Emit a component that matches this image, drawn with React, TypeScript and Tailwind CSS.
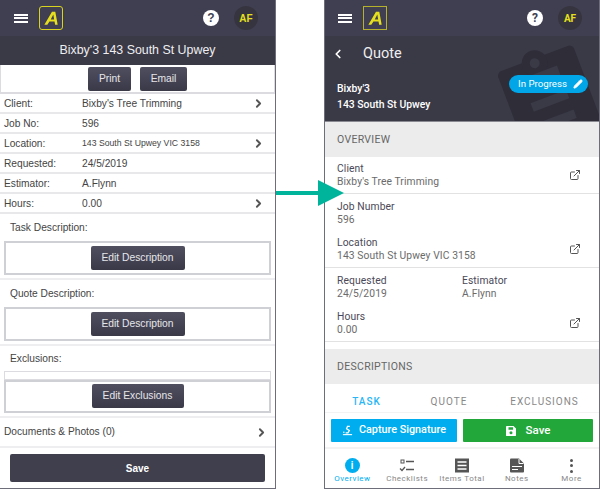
import { ChevronLeft, ChevronRight, ExternalLink, Pencil } from 'lucide-react';
import type { ReactNode } from 'react';

function Logo({ square }: { square?: boolean }) {
  return (
    <div className={`flex h-[24px] w-[24px] items-center justify-center border-[1.5px] ${square ? 'border-[#b5b12a]' : 'rounded-[3px] border-[#d8d31e]'}`}>
      <svg viewBox="0 0 20 20" className="h-[19px] w-[19px]">
        <path d="M2.5 16.5 L10.5 3 H14 L16.5 16.5 H13.8 L13.2 13.2 H7.8 L5.6 16.5 Z M9.2 11 H12.8 L11.9 5.8 Z" fill="#e6e01c" fillRule="evenodd" />
      </svg>
    </div>
  );
}

function TopBar({ pad, square }: { pad: string; square?: boolean }) {
  return (
    <div className={`flex h-[36px] shrink-0 items-center bg-[#403f52] ${pad}`}>
      <div className="flex w-[14px] flex-col gap-[1.5px]">
        <div className="h-[2px] bg-white" />
        <div className="h-[2px] bg-white" />
        <div className="h-[2px] bg-white" />
      </div>
      <div className="ml-[11px]">
        <Logo square={square} />
      </div>
      <div className="ml-auto flex h-[16px] w-[16px] items-center justify-center rounded-full bg-white text-[12px] font-bold text-[#403f52]">?</div>
      <div className="ml-[15px] flex h-[24px] w-[24px] items-center justify-center rounded-full bg-[#36353f] text-[10px] font-bold text-[#e6e01c]">AF</div>
    </div>
  );
}

function OldButton({ children, w }: { children: ReactNode; w: string }) {
  return (
    <div className={`flex h-[24px] items-center justify-center rounded-[2px] bg-gradient-to-b from-[#504f60] to-[#3a3948] text-[10.3px] text-[#e6e6ea] ${w}`}>
      {children}
    </div>
  );
}

function OldRow({ label, value, arrow, small }: { label: string; value: string; arrow?: boolean; small?: boolean }) {
  return (
    <div className="flex h-[20px] items-center border-b-2 border-[#e8e8ea] pl-[4px] pr-[10px] pt-[1px] text-[10.2px] text-[#444]">
      <span className="w-[78px]">{label}</span>
      <span className={small ? 'text-[8.7px]' : ''}>{value}</span>
      {arrow && <ChevronRight className="ml-auto h-[13px] w-[13px] text-[#555]" strokeWidth={3.5} />}
    </div>
  );
}

function OldSection({ label, children, labelH }: { label: string; children: ReactNode; labelH: string }) {
  return (
    <div className="border-b-2 border-[#eeeef0] pb-[3px]">
      <div className={`flex items-center pl-[10px] text-[10.2px] text-[#444] ${labelH}`}>{label}</div>
      {children}
    </div>
  );
}

function EditBox({ label, w, h }: { label: string; w: string; h: string }) {
  return (
    <div className={`mx-[4px] flex items-center justify-center border-2 border-[#cfcfd6] ${h}`}>
      <OldButton w={w}>{label}</OldButton>
    </div>
  );
}

function OldApp() {
  return (
    <div className="flex h-[489px] w-[276px] flex-col border-r border-b border-[#6e6d7a] font-['Liberation_Sans',sans-serif]">
      <TopBar pad="pl-[14px] pr-[17px]" />
      <div className="flex h-[29px] shrink-0 items-center justify-center bg-[#3a3946] text-[12.4px] text-[#eeeef0]">Bixby'3 143 South St Upwey</div>
      <div className="flex h-[29px] items-center justify-center gap-[9px] border-x border-b-2 border-[#dcdce0]">
        <OldButton w="w-[43px]">Print</OldButton>
        <OldButton w="w-[47px]">Email</OldButton>
      </div>
      <OldRow label="Client:" value="Bixby's Tree Trimming" arrow />
      <OldRow label="Job No:" value="596" />
      <OldRow label="Location:" value="143 South St Upwey VIC 3158" arrow small />
      <OldRow label="Requested:" value="24/5/2019" />
      <OldRow label="Estimator:" value="A.Flynn" />
      <OldRow label="Hours:" value="0.00" arrow />
      <OldSection label="Task Description:" labelH="h-[27px]">
        <EditBox label="Edit Description" w="w-[94px]" h="h-[34px]" />
      </OldSection>
      <OldSection label="Quote Description:" labelH="h-[27px]">
        <EditBox label="Edit Description" w="w-[94px]" h="h-[34px]" />
      </OldSection>
      <OldSection label="Exclusions:" labelH="h-[25px]">
        <div className="mx-[4px] h-[9px] border border-[#dcdce0]" />
        <EditBox label="Edit Exclusions" w="w-[92px]" h="h-[33px] pb-[1px]" />
      </OldSection>
      <div className="flex h-[30px] items-center border-b-2 border-[#eeeef0] pl-[4px] pr-[7px] text-[10.2px] text-[#444]">
        Documents &amp; Photos (0)
        <ChevronRight className="ml-auto h-[13px] w-[13px] text-[#555]" strokeWidth={3.5} />
      </div>
      <div className="px-[10px] pt-[6px]">
        <div className="flex h-[28px] items-center justify-center rounded-[2px] bg-[#403f4e] text-[10px] font-bold text-white">Save</div>
      </div>
    </div>
  );
}

function Field({ label, value, icon, h = 'h-[37px]' }: { label: string; value: string; icon?: boolean; h?: string }) {
  return (
    <div className={`flex items-center pl-[12px] pr-[18px] ${h}`}>
      <div className="flex flex-col text-[10.3px] leading-[13px] tracking-[0.1px]">
        <span className="text-[#4a4958]">{label}</span>
        <span className="text-[#6b6b6b]">{value}</span>
      </div>
      {icon && <ExternalLink className="ml-auto h-[12px] w-[12px] text-[#555]" strokeWidth={2} />}
    </div>
  );
}

function SectionHead({ label }: { label: string }) {
  return <div className="flex h-[35px] shrink-0 items-center bg-[#ececec] pl-[12px] text-[10.5px] tracking-[0.3px] text-[#666]">{label}</div>;
}

function NavItem({ label, active, children }: { label: string; active?: boolean; children: ReactNode }) {
  return (
    <div className={`flex w-[55px] flex-col items-center text-[8px] tracking-[0.5px] ${active ? 'text-[#00aeef]' : 'text-[#888]'}`}>
      <div className="flex h-[17px] items-center justify-center">{children}</div>
      <span className="-mt-[1px] whitespace-nowrap">{label}</span>
    </div>
  );
}

function NewApp() {
  return (
    <div className="flex h-[489px] w-[276px] flex-col border-x border-b border-[#6e6d7a] font-['Roboto',sans-serif]">
      <TopBar pad="pl-[13px] pr-[17px]" square />
      <div className="relative h-[86px] shrink-0 overflow-hidden border-b border-[#8a8a92] bg-[#3a3946] text-white">
        <svg viewBox="0 0 275 87" className="absolute left-0 top-0 h-[87px] w-[275px] text-[#2e2d38]">
          <g transform="rotate(-20.7 209.5 22.5)">
            <rect x="169" y="22.5" width="81" height="120" rx="5" fill="currentColor" />
            <circle cx="208" cy="27" r="13" fill="currentColor" />
            <circle cx="208" cy="27" r="5" fill="#3a3946" />
            <rect x="190" y="37" width="38" height="10" fill="#3a3946" />
            <rect x="190" y="63" width="38" height="9" fill="#3a3946" />
            <rect x="190" y="84" width="38" height="9" fill="#3a3946" />
          </g>
        </svg>
        <div className="relative flex h-[36px] items-center pl-[6px]">
          <ChevronLeft className="h-[14px] w-[14px]" strokeWidth={3} />
          <span className="ml-[18px] text-[14.5px] text-[#eeeeee]">Quote</span>
        </div>
        <div className="relative mt-[9px] pl-[12px] text-[10.4px] font-medium leading-[16px]">
          <div>Bixby'3</div>
          <div>143 South St Upwey</div>
        </div>
        <div className="absolute right-[11px] top-[39px] flex h-[18px] w-[79px] items-center rounded-full bg-[#00a6e8] pl-[9px] text-[9.7px]">
          In Progress
          <Pencil className="ml-auto mr-[5px] h-[10px] w-[10px]" fill="white" strokeWidth={2} />
        </div>
      </div>
      <SectionHead label="OVERVIEW" />
      <div className="border-b border-[#e2e2e2]">
        <Field label="Client" value="Bixby's Tree Trimming" icon h="h-[36px]" />
      </div>
      <Field label="Job Number" value="596" />
      <div className="border-b border-[#e2e2e2]">
        <Field label="Location" value="143 South St Upwey VIC 3158" icon h="h-[36px]" />
      </div>
      <div className="grid grid-cols-[125px_1fr]">
        <Field label="Requested" value="24/5/2019" />
        <Field label="Estimator" value="A.Flynn" />
      </div>
      <div className="border-b border-[#e2e2e2]">
        <Field label="Hours" value="0.00" icon h="h-[36px]" />
      </div>
      <div className="h-[7px] shrink-0" />
      <SectionHead label="DESCRIPTIONS" />
      <div className="flex h-[29px] shrink-0 items-center border-b border-[#f3f3f3] pt-[7px] text-[10px] tracking-[1px] text-[#888]">
        <span className="w-[83px] text-center font-medium text-[#29b6f6]">TASK</span>
        <span className="w-[82px] text-center">QUOTE</span>
        <span className="flex-1 text-center">EXCLUSIONS</span>
      </div>
      <div className="flex gap-[6px] border-b-2 border-[#f3f3f3] px-[6px] pb-[5px] pt-[6px] text-[10.8px] font-medium text-white">
        <div className="flex h-[23px] w-[126px] items-center justify-center gap-[6px] rounded-[1px] bg-[#00aeef]">
          <svg viewBox="0 0 12 12" className="h-[11px] w-[11px]">
            <path d="M8.5 1.5 H6 L5 4 L8 6 L6.5 8.5 H4" fill="none" stroke="white" strokeWidth="1.4" />
            <path d="M1 10.5 H11" stroke="white" strokeWidth="1.2" />
            <circle cx="2" cy="8" r="0.8" fill="white" />
          </svg>
          Capture Signature
        </div>
        <div className="flex h-[23px] flex-1 items-center justify-center gap-[10px] rounded-[1px] bg-[#22a83a] text-[11.5px]">
          <svg viewBox="0 0 12 12" className="h-[10px] w-[10px]">
            <path d="M1 0 H9 L12 3 V11 Q12 12 11 12 H1 Q0 12 0 11 V1 Q0 0 1 0 Z M3 1.5 V4.5 H8.5 V1.5 Z" fill="white" fillRule="evenodd" />
            <circle cx="6" cy="8" r="1.8" fill="#22a83a" />
          </svg>
          Save
        </div>
      </div>
      <div className="flex flex-1 items-start pt-[8px]">
        <NavItem label="Overview" active>
          <div className="flex h-[15px] w-[15px] items-center justify-center rounded-full bg-[#00aeef] text-[10px] font-bold text-white">i</div>
        </NavItem>
        <NavItem label="Checklists">
          <svg viewBox="0 0 16 14" className="h-[14px] w-[16px] text-[#555]" fill="none" stroke="currentColor">
            <rect x="2" y="1" width="3" height="3" />
            <path d="M7 2.5 H15 M1 9.5 L3 11.5 L6 8 M7 10.5 H15" strokeWidth="1.3" />
          </svg>
        </NavItem>
        <NavItem label="Items Total">
          <svg viewBox="0 0 14 14" className="h-[15px] w-[14px] text-[#555]">
            <rect width="14" height="14" fill="currentColor" />
            <path d="M2.5 3.5 H11.5 M2.5 7 H11.5 M2.5 10.5 H11.5" stroke="white" strokeWidth="1.3" />
          </svg>
        </NavItem>
        <NavItem label="Notes">
          <svg viewBox="0 0 14 14" className="h-[15px] w-[14px] text-[#555]">
            <path d="M1 0 H9 L14 5 V13 Q14 14 13 14 H1 Q0 14 0 13 V1 Q0 0 1 0 Z" fill="currentColor" />
            <path d="M9 0.5 V5 H13.5 M2 8 H12 M2 11 H8" fill="none" stroke="white" strokeWidth="1" />
          </svg>
        </NavItem>
        <NavItem label="More">
          <div className="flex flex-col gap-[2.5px]">
            <div className="h-[3px] w-[3px] rounded-full bg-[#555]" />
            <div className="h-[3px] w-[3px] rounded-full bg-[#555]" />
            <div className="h-[3px] w-[3px] rounded-full bg-[#555]" />
          </div>
        </NavItem>
      </div>
    </div>
  );
}

export default function App() {
  return (
    <div className="relative flex h-[490px] w-[600px] justify-between overflow-hidden bg-white">
      <OldApp />
      <NewApp />
      {/* arrow from the old screen to the new one, lies over both */}
      <div className="absolute left-[276px] top-[180px] flex items-center">
        <div className="h-[4px] w-[42px] bg-[#00b39b]" />
        <svg viewBox="0 0 26 26" className="h-[26px] w-[26px]">
          <path d="M0 0 L26 13 L0 26 Z" fill="#00b39b" />
        </svg>
      </div>
    </div>
  );
}
